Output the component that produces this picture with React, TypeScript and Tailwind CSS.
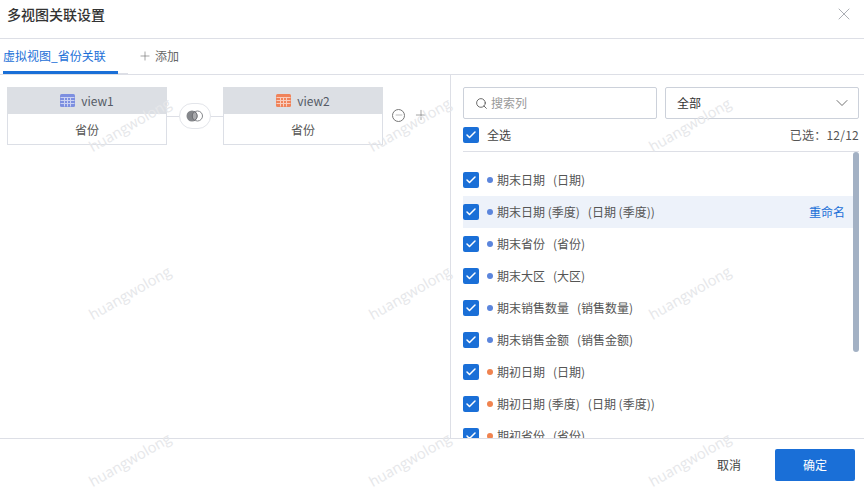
import { Check, ChevronDown, Minus, Plus, Search, X } from 'lucide-react'

const columns = [
  { name: '期末日期', type: '日期', dot: 'bg-[#5b85dc]' },
  { name: '期末日期 (季度)', type: '日期 (季度)', dot: 'bg-[#5b85dc]', active: true },
  { name: '期末省份', type: '省份', dot: 'bg-[#5b85dc]' },
  { name: '期末大区', type: '大区', dot: 'bg-[#5b85dc]' },
  { name: '期末销售数量', type: '销售数量', dot: 'bg-[#5b85dc]' },
  { name: '期末销售金额', type: '销售金额', dot: 'bg-[#5b85dc]' },
  { name: '期初日期', type: '日期', dot: 'bg-[#f0834f]' },
  { name: '期初日期 (季度)', type: '日期 (季度)', dot: 'bg-[#f0834f]' },
  { name: '期初省份', type: '省份', dot: 'bg-[#f0834f]' },
]

const marks = [
  [130, 125], [410, 125], [690, 125],
  [130, 293], [410, 293], [690, 293],
  [130, 460], [410, 460], [690, 460],
]

function Checkbox() {
  return (
    <span className="flex h-4 w-4 shrink-0 items-center justify-center rounded-[2px] bg-[#1a6fd7]">
      <Check size={12} strokeWidth={3} className="text-white" />
    </span>
  )
}

function TableIcon({ color }: { color: string }) {
  return (
    <svg width="15" height="13" viewBox="0 0 15 13">
      <rect width="15" height="13" rx="1.5" fill={color} />
      <path d="M0.5 3.5H14.5M0.5 6.5H14.5M0.5 9.5H14.5M4.5 3V12.5M7.5 3V12.5M10.5 3V12.5" stroke="#fff" strokeWidth="1" opacity="0.6" />
    </svg>
  )
}

function ViewCard({ name, color }: { name: string; color: string }) {
  return (
    <div className="h-[58px] w-40 shrink-0 border border-[#dcdfe6]">
      <div className="-mx-px -mt-px flex h-[27px] items-center justify-center gap-[6px] bg-[#dcdfe4] text-[#555b66]">
        <TableIcon color={color} />
        <span className="text-[12px]">{name}</span>
      </div>
      <div className="flex h-[31px] items-center justify-center text-[12px] text-[#555]">省份</div>
    </div>
  )
}

function JoinIcon() {
  return (
    <div className="flex h-[26px] w-8 shrink-0 items-center justify-center rounded-full border border-[#e3e5ea] bg-white">
      <svg width="18" height="12" viewBox="0 0 18 12">
        <circle cx="6" cy="6" r="5.5" fill="#85878b" />
        <circle cx="11.5" cy="6" r="5" fill="none" stroke="#85878b" />
        <path d="M8.7 1.7A5 5 0 0 1 8.7 10.3A5 5 0 0 1 8.7 1.7Z" fill="#a9aaad" stroke="#5f6064" strokeWidth="0.8" />
      </svg>
    </div>
  )
}

export default function App() {
  return (
    <div className="relative flex h-[490px] w-[864px] flex-col overflow-hidden bg-white font-['Noto_Sans_CJK_SC','Liberation_Sans',sans-serif] text-[#444]">
      <header className="flex h-[39px] shrink-0 items-center justify-between border-b border-[#dddfe6] pb-[10px] pl-[7px] pr-[10px]">
        <h1 className="text-[14px] font-medium leading-none text-[#333]">多视图关联设置</h1>
        <X size={20} strokeWidth={1} className="text-[#9a9da5]" />
      </header>

      <div className="flex h-[36px] shrink-0 items-end border-b border-[#dddfe6] pl-[3px]">
        <div className="flex h-[35px] w-[125px] items-start border-b border-[#dddfe6]">
          <div className="-mb-px flex h-[35px] w-[115px] items-center border-b-[3px] border-[#1a6fd7] pt-px text-[12px] text-[#1a6fd7]">
            虚拟视图_省份关联
          </div>
        </div>
        <div className="ml-[10px] flex h-[35px] items-center gap-[3px] pb-[2px] text-[12px] text-[#666]">
          <Plus size={14} strokeWidth={1} />
          <span>添加</span>
        </div>
      </div>

      <main className="flex min-h-0 flex-1">
        <section className="flex w-[451px] shrink-0 items-start border-r border-[#dddfe6] pl-[7px] pt-[12px]">
          <ViewCard name="view1" color="#7d8fe0" />
          <div className="mt-[16px] flex items-center">
            <span className="h-px w-3 bg-[#dddfe6]" />
            <JoinIcon />
            <span className="h-px w-3 bg-[#dddfe6]" />
          </div>
          <ViewCard name="view2" color="#f0835a" />
          <div className="ml-[9px] mt-[20px] flex items-center gap-[8px] text-[#777]">
            <span className="flex h-[13px] w-[13px] items-center justify-center rounded-full border border-[#777]">
              <Minus size={10} strokeWidth={1.2} />
            </span>
            <Plus size={16} strokeWidth={1} />
          </div>
        </section>

        <section className="flex min-w-0 flex-1 flex-col pl-[12px] pr-[5px] pt-[12px]">
          <div className="flex h-8 shrink-0 gap-2">
            <div className="flex w-[194px] items-center gap-[3px] rounded-[2px] border border-[#ccd1da] pl-[11px] text-[12px] text-[#999]">
              <Search size={13} strokeWidth={1.6} className="text-[#555]" />
              <span>搜索列</span>
            </div>
            <div className="flex w-[194px] items-center justify-between rounded-[2px] border border-[#ccd1da] pl-[11px] pr-[6px] text-[12px] text-[#333]">
              <span>全部</span>
              <ChevronDown size={20} strokeWidth={1} className="text-[#555]" />
            </div>
          </div>

          <div className="flex h-[33px] shrink-0 items-center justify-between border-b border-[#dddfe6] text-[12px]">
            <div className="flex items-center gap-2">
              <Checkbox />
              <span>全选</span>
            </div>
            <span className="tracking-[0.25px] text-[#555]">已选：12/12</span>
          </div>

          <div className="relative min-h-0 flex-1 overflow-hidden pt-3">
            {columns.map((c) => (
              <div
                key={c.name}
                className={`mr-[6px] flex h-8 items-center pr-2 text-[12px] text-[#555] ${c.active ? 'bg-[#edf2fa]' : ''}`}
              >
                <Checkbox />
                <span className={`ml-2 mr-1 h-[6px] w-[6px] shrink-0 rounded-full ${c.dot}`} />
                <span className="whitespace-pre">{`${c.name}   (${c.type})`}</span>
                {c.active && <span className="ml-auto text-[#1a6fd7]">重命名</span>}
              </div>
            ))}
            <div className="absolute right-0 top-0 h-[200px] w-[6px] rounded-[3px] bg-[#a3b1c4]" />
          </div>
        </section>
      </main>

      <footer className="flex h-[52px] shrink-0 items-center justify-end gap-[34px] border-t border-[#dddfe6] pr-[9px] text-[12px]">
        <span className="text-[#444]">取消</span>
        <button className="h-8 w-20 rounded-[2px] bg-[#1a6fd7] text-white">确定</button>
      </footer>

      {marks.map(([x, y]) => (
        <span
          key={`${x}-${y}`}
          className="pointer-events-none absolute -translate-x-1/2 -translate-y-1/2 -rotate-[30deg] font-['Open_Sans',sans-serif] text-[14.5px] text-[#e6e7ea]"
          style={{ left: x, top: y }}
        >
          huangwolong
        </span>
      ))}
    </div>
  )
}
